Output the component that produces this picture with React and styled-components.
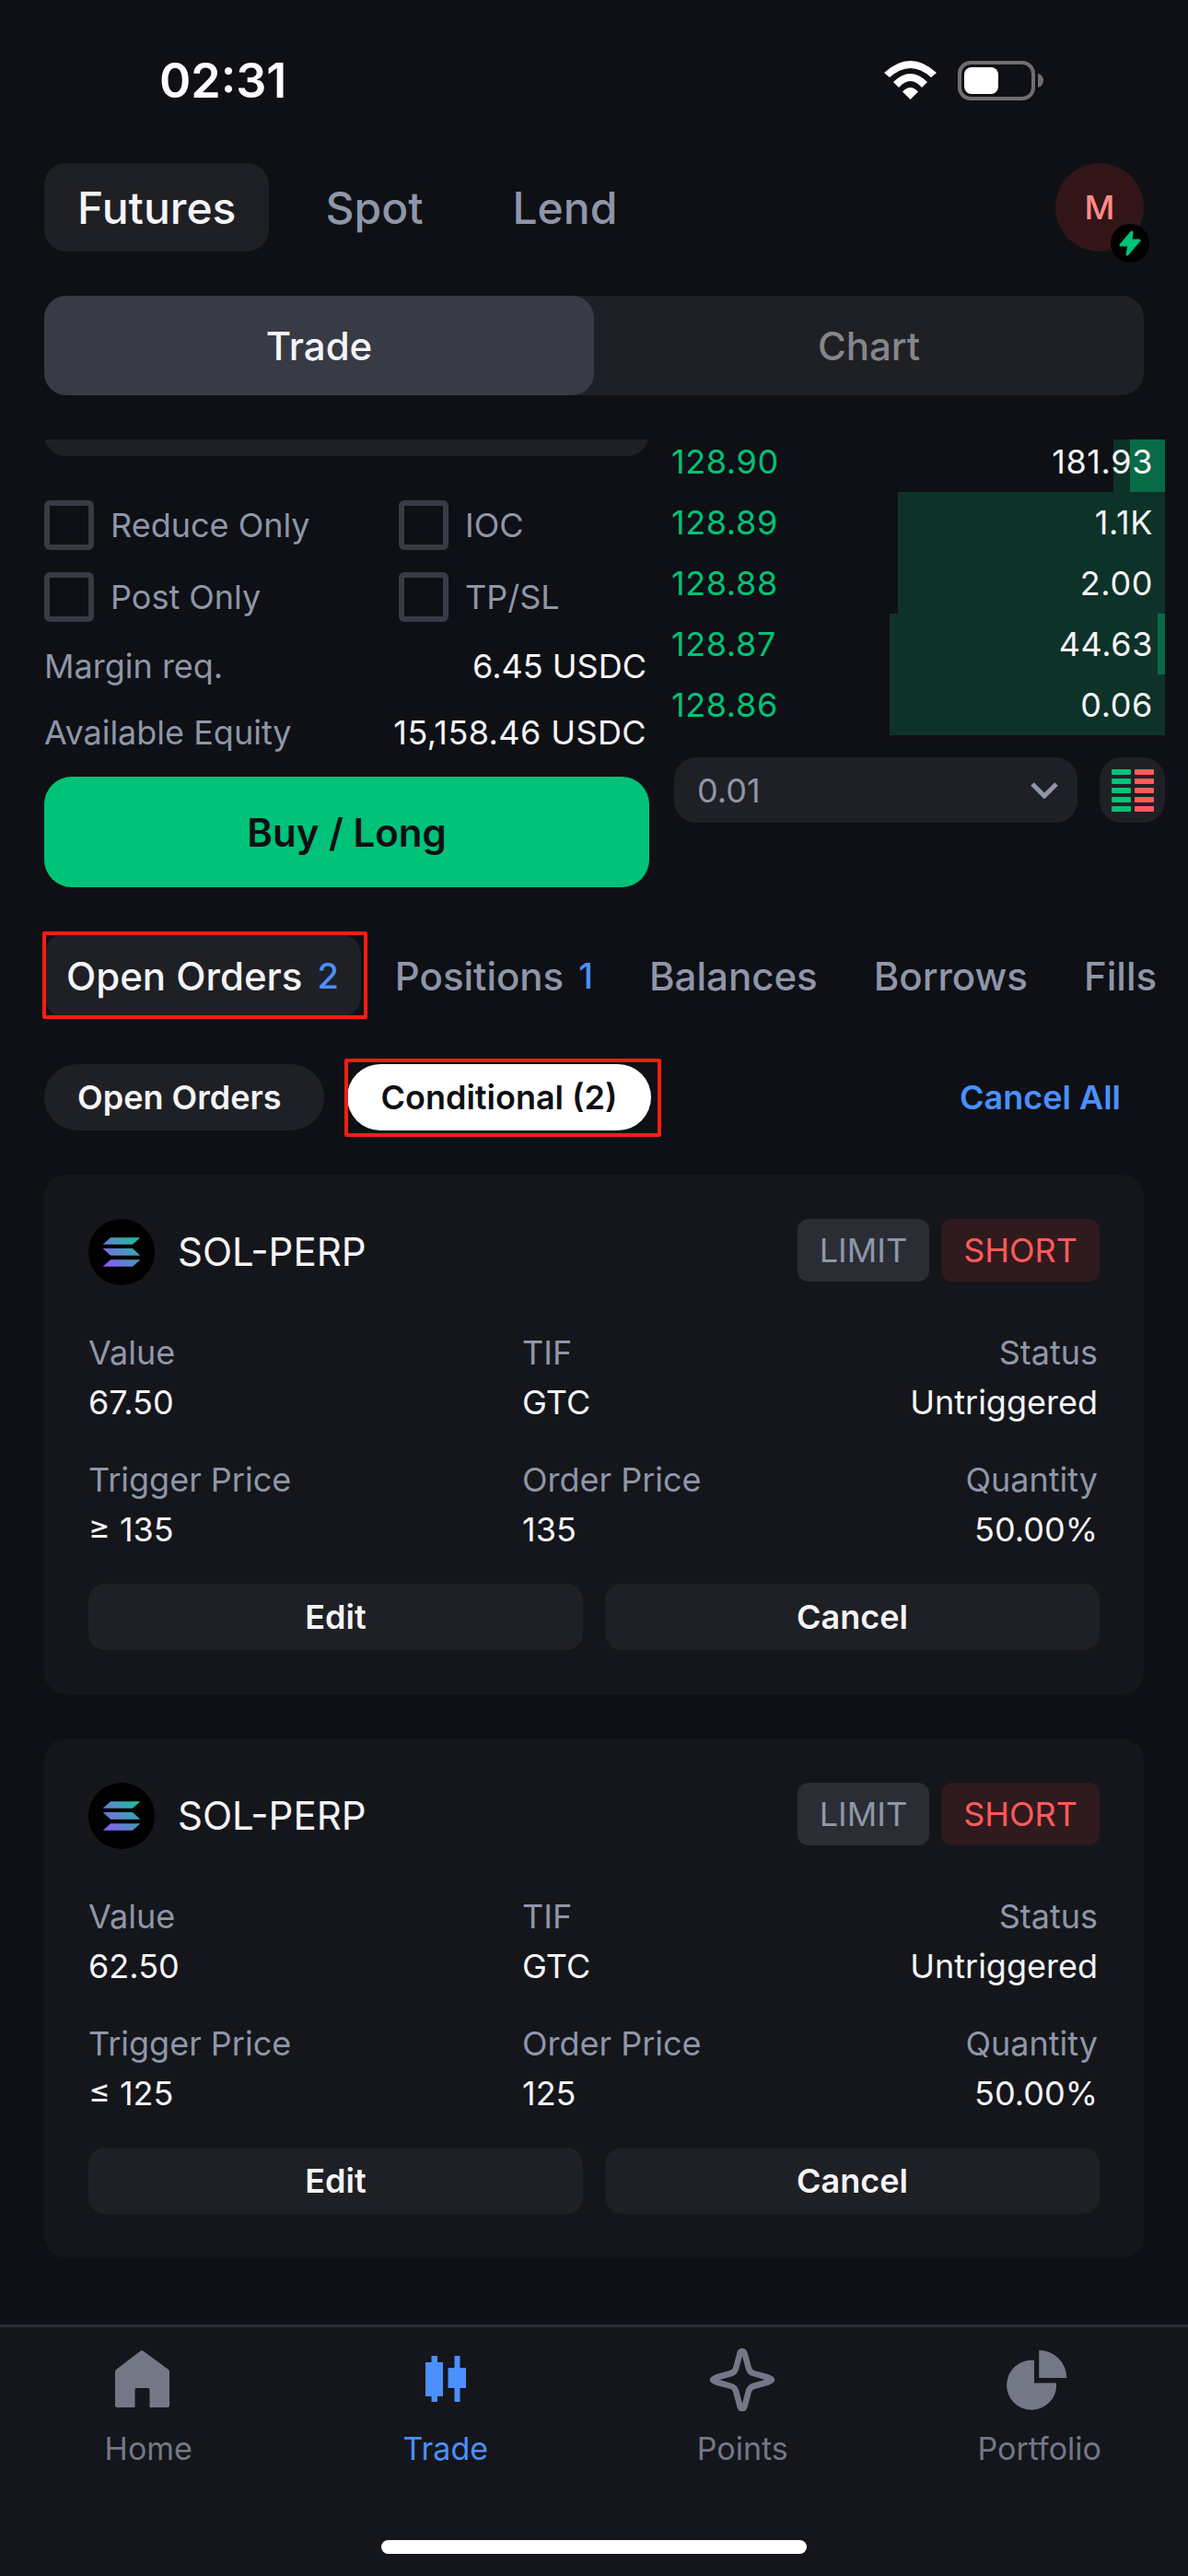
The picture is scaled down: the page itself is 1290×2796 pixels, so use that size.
import styled, { createGlobalStyle } from "styled-components";

const GlobalStyle = createGlobalStyle`
  html, body {
    margin: 0;
    padding: 0;
    background: #0e1015;
    font-family: Inter, "Liberation Sans", sans-serif;
  }
  * { box-sizing: border-box; }
`;

const Page = styled.div`
  width: 1290px;
  height: 2796px;
  background: #0e1015;
  color: #f4f4f6;
  overflow: hidden;
  display: flex;
  flex-direction: column;
`;

const StatusBar = styled.div`
  height: 177px;
  padding: 55px 157px 0 173px;
  display: flex;
  justify-content: space-between;
  align-items: flex-start;
`;

const Time = styled.div`
  font-size: 52px;
  line-height: 66px;
  font-weight: 600;
  color: #fff;
`;

const StatusIcons = styled.div`
  display: flex;
  gap: 23px;
  align-items: center;
  height: 64px;
`;

const Header = styled.div`
  height: 96px;
  padding: 0 48px;
  display: flex;
  align-items: center;
  gap: 25px;
`;

const MarketTab = styled.div`
  height: 96px;
  padding: 0 36px;
  display: flex;
  align-items: center;
  border-radius: 24px;
  font-size: 48px;
  font-weight: 500;
  background: ${(p) => (p.$active ? "#1f2025" : "transparent")};
  color: ${(p) => (p.$active ? "#f4f4f6" : "#8f96a8")};
`;

const Avatar = styled.div`
  position: relative;
  margin-left: auto;
  width: 96px;
  height: 96px;
  border-radius: 50%;
  background: #331518;
  color: #ff8a8a;
  font-size: 36px;
  font-weight: 500;
  display: flex;
  align-items: center;
  justify-content: center;
`;

const Badge = styled.div`
  position: absolute;
  right: -6px;
  bottom: -12px;
  width: 42px;
  height: 42px;
  border-radius: 50%;
  background: #000;
  display: flex;
  align-items: center;
  justify-content: center;
`;

const Segment = styled.div`
  margin: 48px 48px 0;
  height: 108px;
  border-radius: 24px;
  background: #1f2025;
  display: grid;
  grid-template-columns: 597px 1fr;
`;

const SegmentItem = styled.div`
  display: flex;
  align-items: center;
  justify-content: center;
  border-radius: 24px;
  font-size: 42px;
  font-weight: 500;
  background: ${(p) => (p.$active ? "#383a45" : "transparent")};
  color: ${(p) => (p.$active ? "#f4f4f6" : "#85868a")};
`;

const ScrollArea = styled.div`
  margin-top: 48px;
  height: 2046px;
  overflow: hidden;
`;

const Content = styled.div`
  margin-top: -9px;
`;

const TradePanel = styled.div`
  padding: 0 25px 0 48px;
  display: grid;
  grid-template-columns: 657px 536px;
  column-gap: 24px;
  align-items: start;
`;

const FormColumn = styled.div`
  display: flex;
  flex-direction: column;
  gap: 24px;
`;

const QtyInput = styled.div`
  height: 72px;
  margin: -45px 0 24px;
  border-radius: 24px;
  background: #1f2025;
`;

const Options = styled.div`
  display: grid;
  grid-template-columns: 385px 1fr;
  row-gap: 24px;
`;

const Option = styled.label`
  display: flex;
  align-items: center;
  gap: 18px;
  font-size: 36px;
  color: #8f96a8;
`;

const Check = styled.span`
  width: 54px;
  height: 54px;
  border: 6px solid #383a45;
  border-radius: 6px;
`;

const InfoRow = styled.div`
  display: flex;
  justify-content: space-between;
  font-size: 36px;
  line-height: 48px;
  color: #8f96a8;
  padding-right: 3px;
`;

const InfoValue = styled.span`
  color: #f4f4f6;
  letter-spacing: ${(p) => (p.$wide ? "0.4px" : "0")};
`;

const BuyButton = styled.div`
  height: 120px;
  border-radius: 30px;
  background: #00c278;
  color: #0e0f14;
  font-size: 42px;
  font-weight: 600;
  display: flex;
  align-items: center;
  justify-content: center;
`;

const BookColumn = styled.div`
  display: flex;
  flex-direction: column;
  gap: 24px;
`;

const BookRows = styled.div`
  display: flex;
  flex-direction: column;
`;

const BookRow = styled.div`
  position: relative;
  height: 66px;
  padding-right: 13px;
  display: flex;
  align-items: center;
  justify-content: space-between;
  font-size: 36px;
  letter-spacing: 0.6px;
`;

const DepthBar = styled.div`
  position: absolute;
  top: 0;
  bottom: 0;
  right: 0;
  width: ${(p) => p.$width}px;
  background: ${(p) => (p.$strong ? "#076b47" : "#0d3329")};
`;

const Price = styled.span`
  position: relative;
  color: #00c278;
`;

const Qty = styled.span`
  position: relative;
  color: #f4f4f6;
`;

const BookControls = styled.div`
  display: flex;
  gap: 24px;
  padding-left: 3px;
`;

const TickSelect = styled.div`
  flex: 1;
  height: 71px;
  border-radius: 24px;
  background: #1f2025;
  padding: 0 21px 0 25px;
  display: flex;
  align-items: center;
  justify-content: space-between;
  font-size: 36px;
  color: #8f96a8;
`;

const LayoutButton = styled.div`
  width: 71px;
  height: 71px;
  border-radius: 24px;
  background: #1f2025;
  display: grid;
  grid-template-columns: 21px 21px;
  grid-auto-rows: 6px;
  gap: 4px;
  align-content: center;
  justify-content: center;
`;

const LayoutBar = styled.span`
  background: ${(p) => p.$color};
  border-radius: 1px;
`;

const Tabs = styled.div`
  margin-top: 50px;
  padding: 0 48px;
  display: flex;
  gap: 13px;
  white-space: nowrap;
`;

const Tab = styled.div`
  position: relative;
  height: 92px;
  padding: 0 24px;
  border-radius: 24px;
  display: flex;
  align-items: center;
  gap: 16px;
  font-size: 42px;
  font-weight: 500;
  background: ${(p) => (p.$active ? "#1f2025" : "transparent")};
  color: ${(p) => (p.$active ? "#f4f4f6" : "#8f96a8")};
`;

const Count = styled.span`
  color: #4a90ff;
  font-size: 38px;
`;

const Highlight = styled.div`
  position: absolute;
  top: ${(p) => p.$top}px;
  left: ${(p) => p.$left}px;
  right: ${(p) => p.$right}px;
  bottom: ${(p) => p.$bottom}px;
  border: 4px solid #fa1d12;
  border-radius: 2px;
`;

const SubTabs = styled.div`
  margin-top: 50px;
  padding: 0 73px 0 48px;
  display: flex;
  align-items: center;
  gap: 25px;
`;

const Pill = styled.div`
  position: relative;
  height: 72px;
  padding: 0 ${(p) => (p.$active ? "37px" : "46px")} 0 ${(p) => (p.$active ? "37px" : "36px")};
  border-radius: 36px;
  display: flex;
  align-items: center;
  font-size: 36px;
  font-weight: 600;
  background: ${(p) => (p.$active ? "#fff" : "#1f2025")};
  color: ${(p) => (p.$active ? "#0e0f14" : "#f4f4f6")};
`;

const CancelAll = styled.div`
  margin-left: auto;
  font-size: 36px;
  font-weight: 600;
  color: #4a90ff;
`;

const Cards = styled.div`
  margin-top: 48px;
  padding: 0 48px;
  display: flex;
  flex-direction: column;
  gap: 48px;
`;

const Card = styled.div`
  padding: 48px;
  border-radius: 24px;
  background: #14161b;
`;

const CardHeader = styled.div`
  display: flex;
  align-items: center;
  gap: 25px;
  height: 72px;
`;

const Symbol = styled.div`
  font-size: 42px;
  color: #f4f4f6;
  flex: 1;
  margin-top: -2px;
`;

const Tag = styled.div`
  height: 68px;
  margin-top: -4px;
  padding: 0 24px;
  margin-left: -12px;
  border-radius: 12px;
  display: flex;
  align-items: center;
  font-size: 36px;
  background: ${(p) => (p.$danger ? "#2f1a1e" : "#2b2d35")};
  color: ${(p) => (p.$danger ? "#ff5a5a" : "#8f96a8")};
`;

const Fields = styled.div`
  margin-top: 46px;
  display: grid;
  grid-template-columns: 471px 1fr auto;
  row-gap: 30px;
  padding-right: 2px;
`;

const Field = styled.div`
  font-size: 36px;
  line-height: 54px;
  text-align: ${(p) => (p.$right ? "right" : "left")};
`;

const FieldLabel = styled.div`
  color: #8f96a8;
`;

const FieldValue = styled.div`
  color: #f4f4f6;
`;

const CardActions = styled.div`
  margin-top: 32px;
  display: grid;
  grid-template-columns: 1fr 1fr;
  gap: 24px;
`;

const ActionButton = styled.div`
  height: 72px;
  border-radius: 18px;
  background: #1f2025;
  display: flex;
  align-items: center;
  justify-content: center;
  font-size: 36px;
  font-weight: 600;
  color: #f4f4f6;
`;

const Nav = styled.div`
  flex: 1;
  border-top: 3px solid #2b2d35;
  background: #14161b;
  padding-top: 21px;
  display: flex;
  flex-direction: column;
`;

const NavItems = styled.div`
  display: grid;
  grid-template-columns: repeat(4, 1fr);
`;

const NavItem = styled.div`
  display: flex;
  flex-direction: column;
  align-items: center;
  gap: 19px;
  font-size: 34px;
  line-height: 40px;
  color: ${(p) => (p.$active ? "#4a90ff" : "#747786")};
`;

const HomeBar = styled.div`
  width: 462px;
  height: 15px;
  margin: 79px auto 0;
  border-radius: 8px;
  background: #fff;
`;

const Wifi = () => (
  <svg width="57" height="42" viewBox="0 0 57 42" fill="#fff">
    <path d="M0 13Q28.5 -13 57 13L51 18Q28.5 -2 6 18Z" />
    <path d="M10 23Q28.5 5 47 23L41 29Q28.5 15 16 29Z" />
    <path d="M20 33.5Q28.5 24.5 37 33.5L28.5 42Z" />
  </svg>
);

const Battery = () => (
  <svg width="93" height="43" viewBox="0 0 93 43">
    <rect x="2" y="2" width="80" height="39" rx="12" fill="none" stroke="#6e6e70" strokeWidth="4" />
    <rect x="7" y="7" width="37" height="29" rx="8" fill="#fff" />
    <path d="M87 14C91 15 93 18 93 21C93 25 91 28 87 29Z" fill="#6e6e70" />
  </svg>
);

const Bolt = () => (
  <svg width="26" height="28" viewBox="0 0 26 28">
    <path
      d="M15 2L3 16H12L10 26L23 11H14Z"
      fill="#00c278"
      stroke="#00c278"
      strokeWidth="3"
      strokeLinejoin="round"
    />
  </svg>
);

const Chevron = () => (
  <svg width="30" height="18" viewBox="0 0 30 18">
    <polyline points="2,2 15,15 28,2" fill="none" stroke="#8f96a8" strokeWidth="5" />
  </svg>
);

const SolanaIcon = () => (
  <svg width="72" height="72" viewBox="0 0 72 72" style={{ flexShrink: 0 }}>
    <defs>
      <linearGradient id="sol" gradientUnits="userSpaceOnUse" x1="18" y1="54" x2="54" y2="18">
        <stop offset="0" stopColor="#9154f5" />
        <stop offset="1" stopColor="#14c795" />
      </linearGradient>
    </defs>
    <circle cx="36" cy="36" r="36" fill="#000" />
    <path d="M24 20.3H56.3L48 27.7H15.7Z" fill="url(#sol)" />
    <path d="M15.7 32H48L56.3 39.7H24Z" fill="url(#sol)" />
    <path d="M24 44.3H56.3L48 51.7H15.7Z" fill="url(#sol)" />
  </svg>
);

const HomeIcon = () => (
  <svg width="72" height="72" viewBox="0 0 72 72" fill="currentColor">
    <path d="M27.5 4.7Q29 3.6 30.5 4.7L58 25Q59 26 59 27.5V64Q59 66 57 66H37.5V47Q37.5 45 35.5 45H23.5Q21.5 45 21.5 47V66H2Q0 66 0 64V27.5Q0 26 1 25Z" />
  </svg>
);

const TradeIcon = () => (
  <svg width="72" height="72" viewBox="0 0 72 72" fill="currentColor">
    <rect x="14" y="17" width="19" height="37" />
    <rect x="20.5" y="10" width="6.5" height="50" />
    <rect x="38.5" y="23" width="19.5" height="22" />
    <rect x="45.5" y="10" width="6" height="50" />
  </svg>
);

const PointsIcon = () => (
  <svg width="72" height="72" viewBox="0 0 72 72" fill="none" stroke="currentColor" strokeWidth="6.5" strokeLinejoin="round">
    <path d="M36 5C38 5 38.5 7 39 9L43 24Q44.5 28 48 29L64 33.5Q68 35 68 36Q68 37 64 38.5L48 43Q44.5 44 43 48L39 63Q38.5 67 36 67Q33.5 67 33 63L29 48Q27.5 44 24 43L8 38.5Q4 37 4 36Q4 35 8 33.5L24 29Q27.5 28 29 24L33 9Q33.5 5 36 5Z" />
  </svg>
);

const PortfolioIcon = () => (
  <svg width="72" height="72" viewBox="0 0 72 72" fill="currentColor">
    <path d="M30 15V39.5H54A27 27 0 1 1 30 15Z" />
    <path d="M35.25 4A30 30 0 0 1 65.25 34H35.25Z" />
  </svg>
);

const bookRows = [
  { price: "128.90", qty: "181.93", depth: 56, fill: 38 },
  { price: "128.89", qty: "1.1K", depth: 290 },
  { price: "128.88", qty: "2.00", depth: 290 },
  { price: "128.87", qty: "44.63", depth: 299, fill: 8 },
  { price: "128.86", qty: "0.06", depth: 299 },
];

const orders = [
  { value: "67.50", trigger: "≥ 135", price: "135" },
  { value: "62.50", trigger: "≤ 125", price: "125" },
];

const OrderCard = ({ value, trigger, price }) => (
  <Card>
    <CardHeader>
      <SolanaIcon />
      <Symbol>SOL-PERP</Symbol>
      <Tag>LIMIT</Tag>
      <Tag $danger>SHORT</Tag>
    </CardHeader>
    <Fields>
      <Field>
        <FieldLabel>Value</FieldLabel>
        <FieldValue>{value}</FieldValue>
      </Field>
      <Field>
        <FieldLabel>TIF</FieldLabel>
        <FieldValue>GTC</FieldValue>
      </Field>
      <Field $right>
        <FieldLabel>Status</FieldLabel>
        <FieldValue>Untriggered</FieldValue>
      </Field>
      <Field>
        <FieldLabel>Trigger Price</FieldLabel>
        <FieldValue>{trigger}</FieldValue>
      </Field>
      <Field>
        <FieldLabel>Order Price</FieldLabel>
        <FieldValue>{price}</FieldValue>
      </Field>
      <Field $right>
        <FieldLabel>Quantity</FieldLabel>
        <FieldValue>50.00%</FieldValue>
      </Field>
    </Fields>
    <CardActions>
      <ActionButton>Edit</ActionButton>
      <ActionButton>Cancel</ActionButton>
    </CardActions>
  </Card>
);

const App = () => {
  return (
    <Page>
      <GlobalStyle />
      <StatusBar>
        <Time>02:31</Time>
        <StatusIcons>
          <Wifi />
          <Battery />
        </StatusIcons>
      </StatusBar>

      <Header>
        <MarketTab $active>Futures</MarketTab>
        <MarketTab>Spot</MarketTab>
        <MarketTab>Lend</MarketTab>
        <Avatar>
          M
          <Badge>
            <Bolt />
          </Badge>
        </Avatar>
      </Header>

      <Segment>
        <SegmentItem $active>Trade</SegmentItem>
        <SegmentItem>Chart</SegmentItem>
      </Segment>

      <ScrollArea>
        <Content>
          <TradePanel>
            <FormColumn>
              <QtyInput />
              <Options>
                <Option><Check />Reduce Only</Option>
                <Option><Check />IOC</Option>
                <Option><Check />Post Only</Option>
                <Option><Check />TP/SL</Option>
              </Options>
              <InfoRow>
                Margin req.
                <InfoValue>6.45 USDC</InfoValue>
              </InfoRow>
              <InfoRow>
                Available Equity
                <InfoValue $wide>15,158.46 USDC</InfoValue>
              </InfoRow>
              <BuyButton>Buy / Long</BuyButton>
            </FormColumn>

            <BookColumn>
              <BookRows>
                {bookRows.map((r) => (
                  <BookRow key={r.price}>
                    <DepthBar $width={r.depth} />
                    {r.fill && <DepthBar $width={r.fill} $strong />}
                    <Price>{r.price}</Price>
                    <Qty>{r.qty}</Qty>
                  </BookRow>
                ))}
              </BookRows>
              <BookControls>
                <TickSelect>
                  0.01
                  <Chevron />
                </TickSelect>
                <LayoutButton>
                  {[0, 1, 2, 3, 4].flatMap((i) => [
                    <LayoutBar key={`g${i}`} $color="#00c278" />,
                    <LayoutBar key={`r${i}`} $color="#ff5a5a" />,
                  ])}
                </LayoutButton>
              </BookControls>
            </BookColumn>
          </TradePanel>

          <Tabs>
            <Tab $active>
              Open Orders <Count>2</Count>
              <Highlight $top={-2} $left={-2} $right={-7} $bottom={-1} />
            </Tab>
            <Tab>
              Positions <Count>1</Count>
            </Tab>
            <Tab>Balances</Tab>
            <Tab>Borrows</Tab>
            <Tab>Fills</Tab>
          </Tabs>

          <SubTabs>
            <Pill>Open Orders</Pill>
            <Pill $active>
              Conditional (2)
              <Highlight $top={-6} $left={-3} $right={-11} $bottom={-7} />
            </Pill>
            <CancelAll>Cancel All</CancelAll>
          </SubTabs>

          <Cards>
            {orders.map((o) => (
              <OrderCard key={o.value} {...o} />
            ))}
          </Cards>
        </Content>
      </ScrollArea>

      <Nav>
        <NavItems>
          <NavItem><HomeIcon />Home</NavItem>
          <NavItem $active><TradeIcon />Trade</NavItem>
          <NavItem><PointsIcon />Points</NavItem>
          <NavItem><PortfolioIcon />Portfolio</NavItem>
        </NavItems>
        <HomeBar />
      </Nav>
    </Page>
  );
};

export default App;
